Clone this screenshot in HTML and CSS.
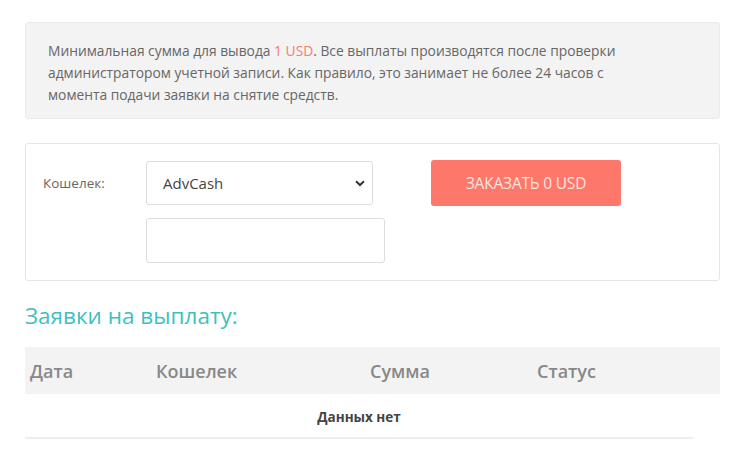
FILE: index.html
```html
<!DOCTYPE html>
<html lang="ru">
<head>
<meta charset="utf-8">
<link rel="stylesheet" href="styles.css">
</head>
<body>
<div class="page">
  <div class="notice">
    Минимальная сумма для вывода <span class="accent">1 USD</span>. Все выплаты производятся после проверки администратором учетной записи. Как правило, это занимает не более 24 часов с момента подачи заявки на снятие средств.
  </div>

  <div class="card">
    <div class="label">Кошелек:</div>
    <div class="fields">
      <div class="select">
        <span>AdvCash</span>
        <svg class="chev" width="10" height="7" viewBox="0 0 10 7"><path d="M1 1.2 L5 5 L9 1.2" fill="none" stroke="#333" stroke-width="2"/></svg>
      </div>
      <div class="input"></div>
    </div>
    <div class="btn">ЗАКАЗАТЬ 0 USD</div>
  </div>

  <h2 class="title">Заявки на выплату:</h2>

  <div class="table">
    <div class="thead">
      <div class="c1">Дата</div>
      <div class="c2">Кошелек</div>
      <div class="c3">Сумма</div>
      <div class="c4">Статус</div>
    </div>
    <div class="empty">Данных нет</div>
  </div>
</div>
</body>
</html>
```

FILE: styles.css
```css
* { box-sizing: border-box; }
html, body { margin: 0; padding: 0; background: #fff; }
body { font-family: "Open Sans", "DejaVu Sans", sans-serif; color: #666; }
.page { padding: 22px 30px 0 25px; width: 750px; }

.notice {
  background: #f3f3f3;
  border: 1px solid #ebebeb;
  border-radius: 3px;
  height: 97px;
  padding: 17px 62px 0 22px;
  font-size: 13.8px;
  line-height: 22px;
  color: #666;
}
.accent { color: #f0806f; }

.card {
  margin-top: 24px;
  height: 138px;
  border: 1px solid #e6e6e6;
  border-radius: 3px;
  display: flex;
  align-items: flex-start;
  padding: 17px 0 0 17px;
}
.label {
  width: 103px;
  font-size: 13.5px;
  color: #666;
  padding-top: 13px;
}
.fields { display: flex; flex-direction: column; gap: 13px; }
.select {
  width: 227px; height: 44px;
  border: 1px solid #ddd;
  border-radius: 3px;
  display: flex; align-items: center; justify-content: space-between;
  padding: 0 7px 0 16px;
  font-size: 15px;
  color: #444;
}
.chev { margin-top: 1px; }
.input {
  width: 239px; height: 45px;
  border: 1px solid #ddd;
  border-radius: 3px;
}
.btn {
  margin-left: 46px;
  margin-top: -1px;
  width: 190px; height: 46px;
  background: #fd776b;
  border-radius: 3px;
  color: #fde3de;
  font-size: 15.5px;
  letter-spacing: -0.2px;
  display: flex; align-items: center; justify-content: center;
}

.title {
  margin: 20px 0 0 0;
  font-weight: 400;
  font-size: 22.5px;
  color: #3fbfbd;
  line-height: 30px;
}

.table { margin-top: 16px; }
.thead {
  background: #f3f3f3;
  height: 47px;
  display: flex;
  align-items: center;
  font-weight: 600;
  font-size: 18px;
  color: #888;
}
.thead div { flex: none; }
.c1 { width: 131px; padding-left: 5px; }
.c2 { width: 214px; }
.c3 { width: 167px; }
.c4 { width: 100px; }
.empty {
  width: 668px;
  height: 45px;
  padding-top: 3px;
  border-bottom: 2px solid #eee;
  display: flex; align-items: center; justify-content: center;
  font-weight: 700;
  font-size: 13.5px;
  color: #444;
}
```
